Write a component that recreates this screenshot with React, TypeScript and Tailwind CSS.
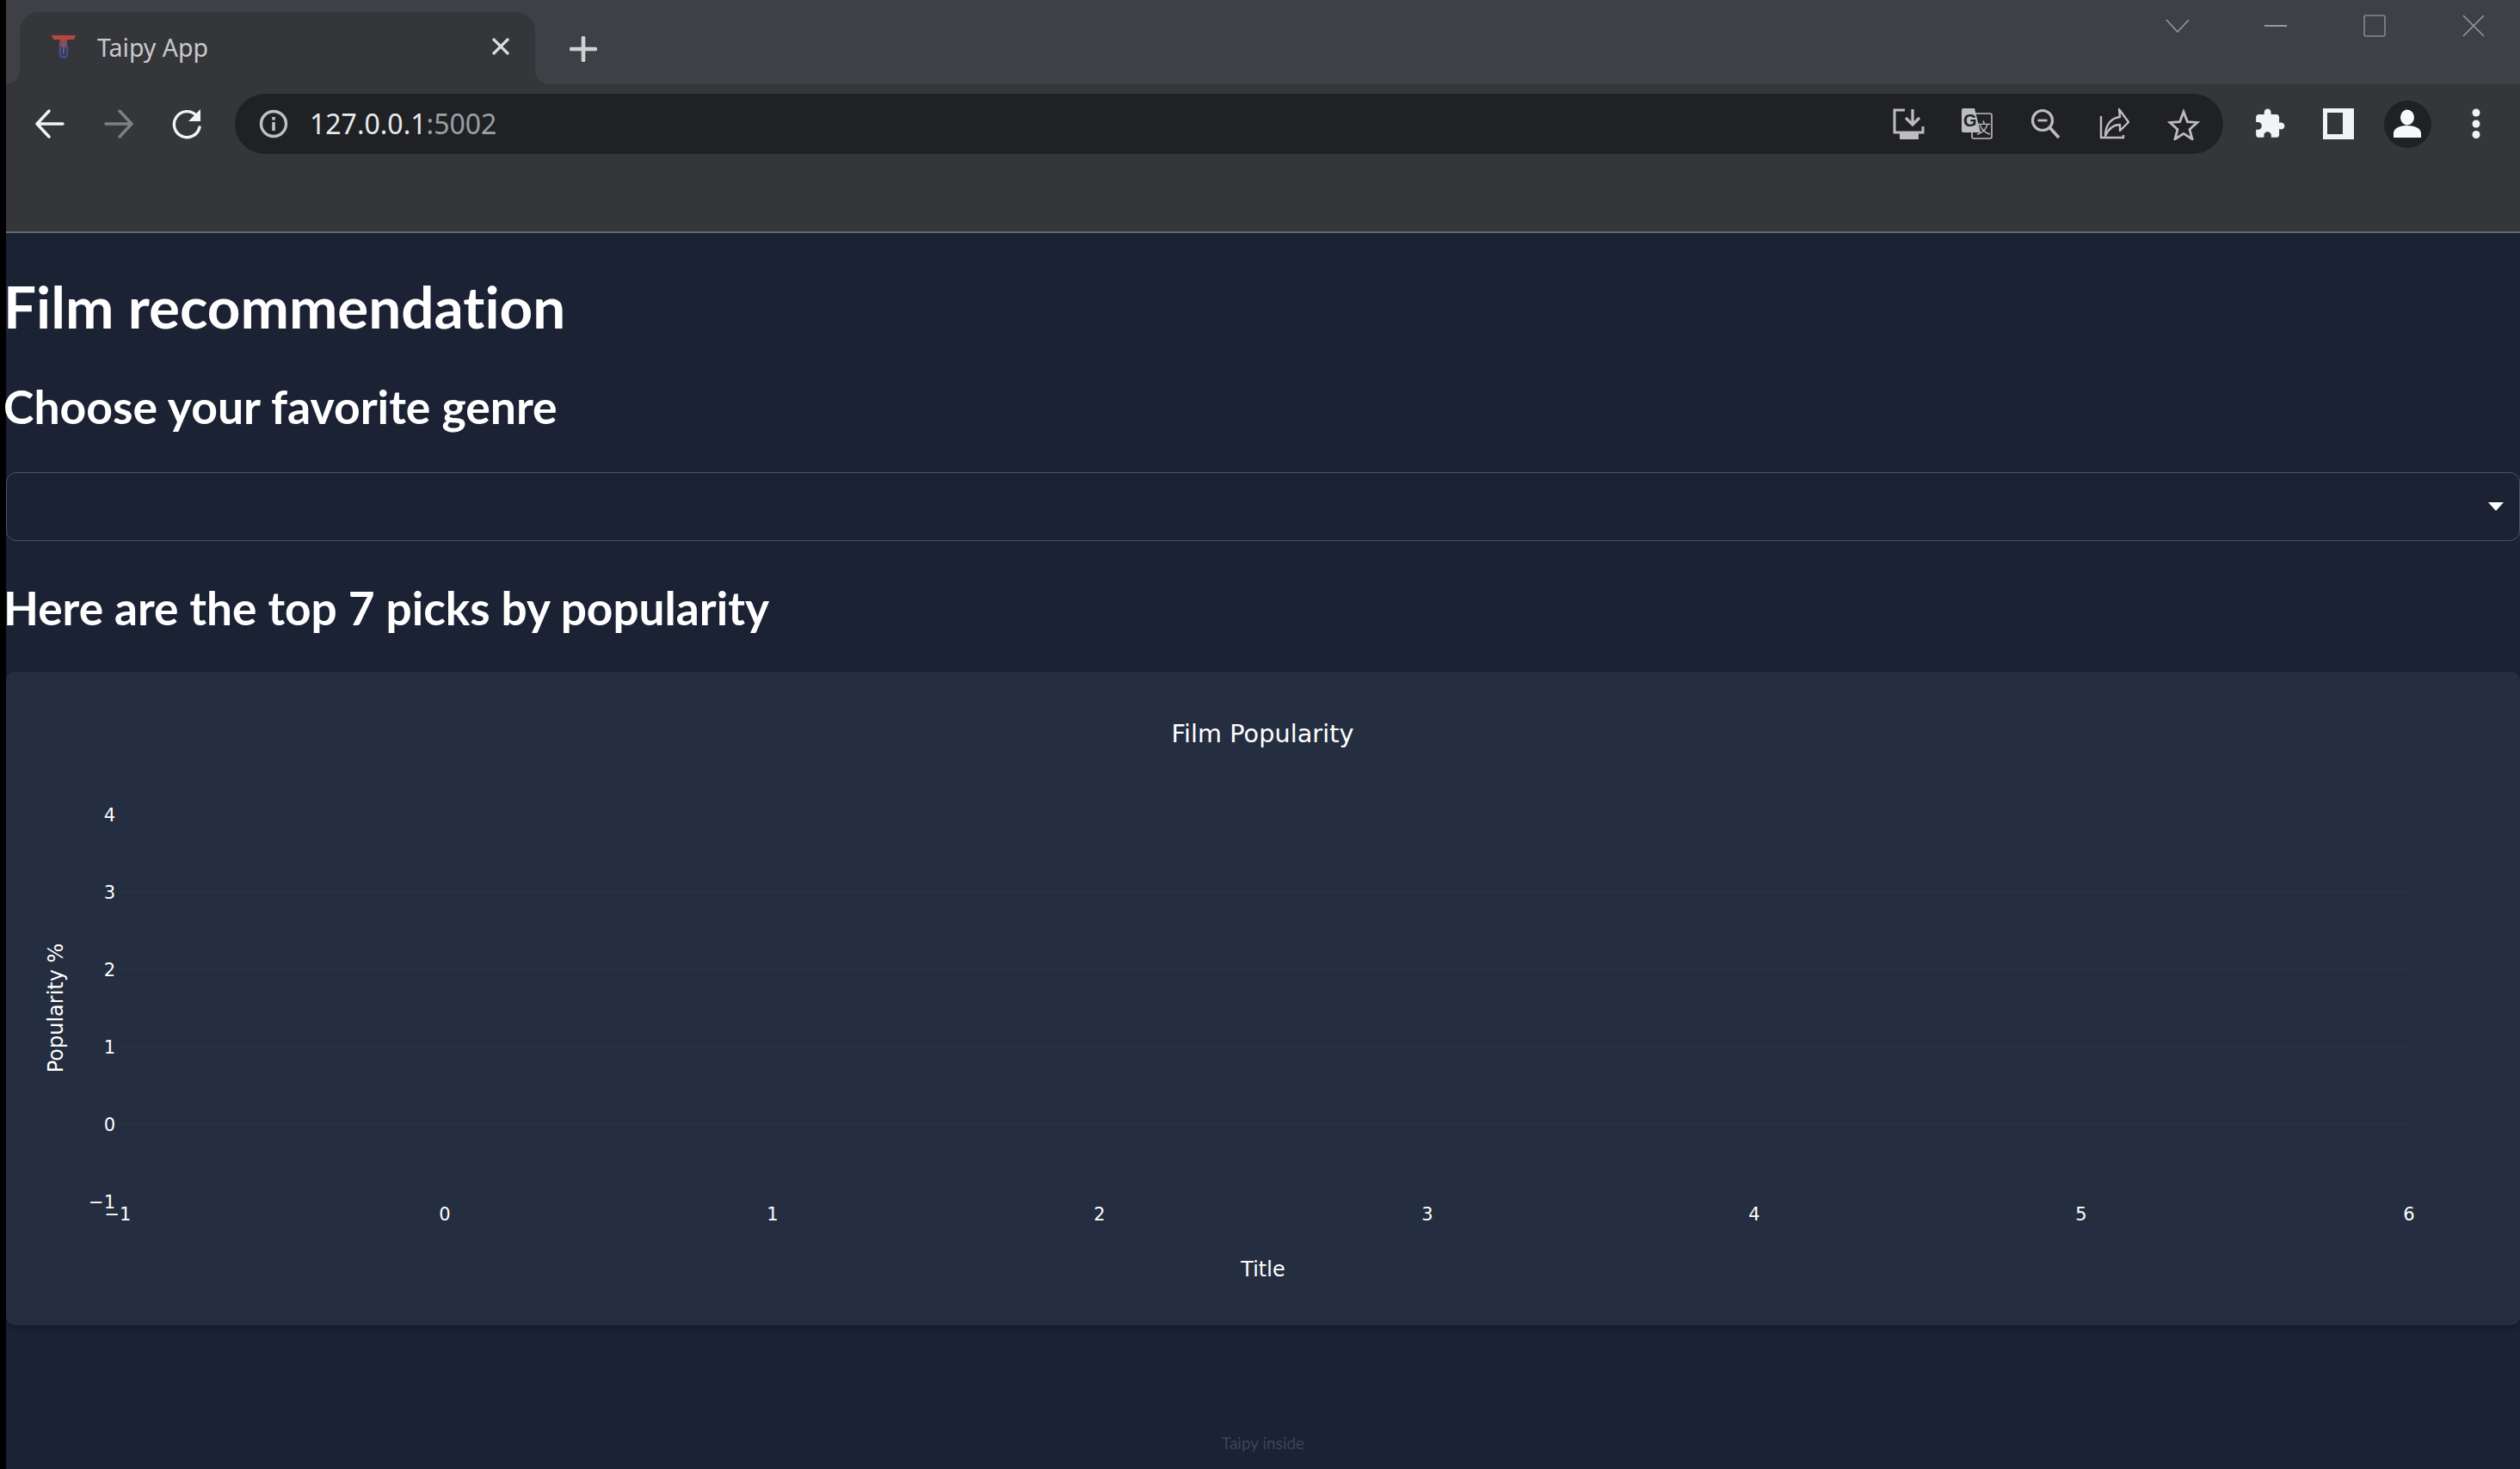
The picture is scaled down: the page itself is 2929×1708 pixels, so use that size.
import React from "react";

const ui = "font-['Noto_Sans','Open_Sans',sans-serif]";

function Favicon() {
  return (
    <svg width="30" height="30" viewBox="0 0 30 30" fill="none">
      <path d="M1 2h28l-2 5h-8l-2 3h-4l-2-3H3z" fill="#b5483f" />
      <path d="M10 8h9v8h-9z" fill="#8a4a4e" />
      <path d="M11 15v9c0 5 8 5 8 0v-10" stroke="#3c4f96" strokeWidth="2.6" />
      <path d="M15 10v14" stroke="#5c6288" strokeWidth="2" />
    </svg>
  );
}

function IconBtn({ children }: { children: React.ReactNode }) {
  return <div className="flex h-[70px] w-[80px] shrink-0 items-center justify-center">{children}</div>;
}

function Back({ color }: { color: string }) {
  return (
    <svg width="36" height="34" viewBox="0 0 36 34" fill="none" stroke={color} strokeWidth="3.4" strokeLinecap="round" strokeLinejoin="round">
      <path d="M33 17H4M17 2L3 17l14 15" />
    </svg>
  );
}

function Forward({ color }: { color: string }) {
  return (
    <svg width="36" height="34" viewBox="0 0 36 34" fill="none" stroke={color} strokeWidth="3.4" strokeLinecap="round" strokeLinejoin="round">
      <path d="M3 17h29M19 2l14 15-14 15" />
    </svg>
  );
}

function Reload() {
  return (
    <svg width="38" height="36" viewBox="0 0 38 36" fill="none">
      <path d="M29 8A15 15 0 1 0 33 22" stroke="#f1f3f4" strokeWidth="3.4" strokeLinecap="round" />
      <path d="M34 1v14H20z" fill="#f1f3f4" />
    </svg>
  );
}

function Info() {
  return (
    <svg width="34" height="34" viewBox="0 0 34 34" fill="none">
      <circle cx="17" cy="17" r="14.5" stroke="#bdc1c6" strokeWidth="3.4" />
      <rect x="15.2" y="15" width="3.6" height="10" fill="#bdc1c6" />
      <rect x="15.2" y="9" width="3.6" height="3.6" fill="#bdc1c6" />
    </svg>
  );
}

function Download() {
  return (
    <svg width="38" height="38" viewBox="0 0 38 38" fill="none">
      <path d="M15 3H3v26h33v-7" stroke="#bdbdc0" strokeWidth="3" />
      <path d="M24 2v17M16 12l8 8 8-8" stroke="#bdbdc0" strokeWidth="3.2" />
      <rect x="9" y="30" width="22" height="7" fill="#bdbdc0" />
    </svg>
  );
}

function Translate() {
  return (
    <svg width="38" height="38" viewBox="0 0 38 38" fill="none">
      <rect x="13" y="7" width="23" height="29" rx="2" stroke="#bdbdc0" strokeWidth="1.6" />
      <path d="M1 3a2 2 0 0 1 2-2h13l7 28H3a2 2 0 0 1-2-2z" fill="#bdbdc0" />
      <text x="3" y="22" fontSize="20" fontWeight="700" fill="#202124" fontFamily="'Liberation Sans',sans-serif">G</text>
      <text x="18" y="30" fontSize="17" fill="#bdbdc0" fontFamily="'Noto Sans CJK SC',sans-serif">文</text>
    </svg>
  );
}

function ZoomOut() {
  return (
    <svg width="38" height="38" viewBox="0 0 38 38" fill="none" stroke="#bdbdc0">
      <circle cx="15" cy="15" r="11.5" strokeWidth="3.2" />
      <path d="M23.5 23.5L34 35" strokeWidth="3.6" />
      <path d="M9.5 15h11" strokeWidth="2.8" />
    </svg>
  );
}

function Share() {
  return (
    <svg width="38" height="38" viewBox="0 0 38 38" fill="none" stroke="#bdbdc0" strokeWidth="2.4">
      <path d="M3 10v25h26v-3" />
      <path d="M8 33c0-13 7-21 17-22l-1-9 11 15-10 10v-7c-7 0-13 4-17 13z" strokeLinejoin="round" />
    </svg>
  );
}

function Star() {
  return (
    <svg width="38" height="38" viewBox="0 0 38 38" fill="none">
      <path d="M19 5l4.4 11.600 11.600.8-9 8 3 11.400-10-6.400-10 6.400 3-11.400-9-8 11.600-.8z" stroke="#bdbdc0" strokeWidth="2.800" strokeLinejoin="miter" />
    </svg>
  );
}

function Puzzle() {
  return (
    <svg width="38" height="38" viewBox="0 0 24 24" fill="#f1f3f4">
      <path d="M20.500 11H19V7c0-1.100-.9-2-2-2h-4V3.500C13 2.120 11.880 1 10.500 1S8 2.120 8 3.500V5H4c-1.100 0-1.990.9-1.990 2v3.800H3.500c1.490 0 2.700 1.210 2.700 2.700s-1.210 2.700-2.700 2.700H2V20c0 1.100.9 2 2 2h3.800v-1.500c0-1.490 1.210-2.700 2.700-2.700 1.490 0 2.700 1.210 2.700 2.700V22H17c1.100 0 2-.9 2-2v-4h1.500c1.380 0 2.500-1.120 2.500-2.500S21.880 11 20.500 11z" />
    </svg>
  );
}

function SidePanel() {
  return (
    <svg width="36" height="36" viewBox="0 0 36 36">
      <path fillRule="evenodd" clipRule="evenodd" d="M0 0h36v36H0zM5 5v25h18V5z" fill="#f1f3f4" />
    </svg>
  );
}

function Profile() {
  return (
    <div className="flex h-[55px] w-[55px] items-center justify-center rounded-full bg-[#202124]">
      <svg width="34" height="34" viewBox="0 0 34 34" fill="#f8f9fa">
        <ellipse cx="17" cy="9.500" rx="8" ry="9" />
        <path d="M1 33v-5c0-6 8-9 16-9s16 3 16 9v5z" />
      </svg>
    </div>
  );
}

function Dots() {
  return (
    <svg width="12" height="36" viewBox="0 0 12 36" fill="#f1f3f4">
      <circle cx="6" cy="5" r="4.500" />
      <circle cx="6" cy="18" r="4.500" />
      <circle cx="6" cy="30.500" r="4.500" />
    </svg>
  );
}

function WindowControls() {
  return (
    <div className="ml-auto flex h-[60px] items-center pr-[41px]">
      <svg width="28" height="16" viewBox="0 0 28 16" fill="none" stroke="#97989b" strokeWidth="1.600" className="mr-[87px]">
        <path d="M1 1l13 14L27 1" />
      </svg>
      <svg width="26" height="2" viewBox="0 0 26 2" className="mr-[89px]">
        <rect width="26" height="2" fill="#97989b" />
      </svg>
      <svg width="26" height="26" viewBox="0 0 26 26" fill="none" stroke="#87888b" strokeWidth="1.600" className="mr-[89px]">
        <rect x="1" y="1" width="24" height="24" rx="2" />
      </svg>
      <svg width="26" height="26" viewBox="0 0 26 26" fill="none" stroke="#97989b" strokeWidth="1.600">
        <path d="M1 1l24 24M25 1L1 25" />
      </svg>
    </div>
  );
}

function BrowserChrome() {
  return (
    <header className={`${ui} bg-[#35363a]`}>
      <div className="flex h-[98px] bg-[#3f4045]">
        <div className="relative ml-[16px] mt-[14px] flex h-[84px] w-[599px] items-center rounded-t-[22px] bg-[#35363a] pb-[5px] pl-[36px] pr-[29px]">
          <span className="absolute -left-[16px] bottom-0 h-[16px] w-[16px] bg-[#35363a]">
            <span className="block h-full w-full rounded-br-[16px] bg-[#3f4045]" />
          </span>
          <span className="absolute -right-[16px] bottom-0 h-[16px] w-[16px] bg-[#35363a]">
            <span className="block h-full w-full rounded-bl-[16px] bg-[#3f4045]" />
          </span>
          <Favicon />
          <span className="ml-[24px] mt-[3px] text-[28.5px] leading-none text-[#c8c9cc]">Taipy App</span>
          <svg width="22" height="20" viewBox="0 0 22 20" fill="none" stroke="#dcdde0" strokeWidth="3.200" className="ml-auto">
            <path d="M2 1l18 18M20 1L2 19" />
          </svg>
        </div>
        <svg width="32" height="30" viewBox="0 0 32 30" fill="none" stroke="#d0d1d4" strokeWidth="4.600" strokeLinecap="round" className="ml-[40px] mt-[42px]">
          <path d="M16 2v26M2 15h28" />
        </svg>
        <WindowControls />
      </div>
      <div className="box-content flex h-[171px] items-start border-b-2 border-[#66676a]">
        <div className="mt-[11px] flex w-full items-center px-[11px]">
          <IconBtn><Back color="#f1f3f4" /></IconBtn>
          <IconBtn><Forward color="#7f8083" /></IconBtn>
          <IconBtn><Reload /></IconBtn>
          <div className="ml-[15px] flex h-[70px] min-w-0 flex-1 items-center rounded-full bg-[#202124] pl-[28px] pr-[6px]">
            <Info />
            <span className="ml-[25px] text-[32px] leading-none text-[#e8eaed]">
              127.0.0.1<span className="text-[#9aa0a6]">:5002</span>
            </span>
            <div className="ml-auto flex items-center">
              <IconBtn><Download /></IconBtn>
              <IconBtn><Translate /></IconBtn>
              <IconBtn><ZoomOut /></IconBtn>
              <IconBtn><Share /></IconBtn>
              <IconBtn><Star /></IconBtn>
            </div>
          </div>
          <div className="ml-[14px] flex items-center">
            <IconBtn><Puzzle /></IconBtn>
            <IconBtn><SidePanel /></IconBtn>
            <IconBtn><Profile /></IconBtn>
            <IconBtn><Dots /></IconBtn>
          </div>
        </div>
      </div>
    </header>
  );
}

const X_TICKS = [
  { label: "−1", x: 130 },
  { label: "0", x: 510 },
  { label: "1", x: 891 },
  { label: "2", x: 1271 },
  { label: "3", x: 1652 },
  { label: "4", x: 2032 },
  { label: "5", x: 2412 },
  { label: "6", x: 2793 },
];
const Y_TICKS = [
  { label: "4", y: 166, grid: false },
  { label: "3", y: 256, grid: true },
  { label: "2", y: 346, grid: true },
  { label: "1", y: 436, grid: true },
  { label: "0", y: 526, grid: true },
  { label: "−1", y: 616, grid: false },
];

function Chart() {
  return (
    <section className="mt-[43px] h-[760px] rounded-[10px] bg-[#252e40] shadow-[0_2px_6px_rgba(0,0,0,0.35)]">
      <svg width="2922" height="760" viewBox="0 0 2922 760" fill="#ffffff" fontFamily="'DejaVu Sans',sans-serif">
        {Y_TICKS.filter((t) => t.grid).map((t) => (
          <line key={t.label} x1="130" x2="2793" y1={t.y} y2={t.y} stroke="#2c3445" strokeWidth="1" />
        ))}
        {X_TICKS.map((t) => (
          <text key={t.label} x={t.x} y="638" fontSize="21" textAnchor="middle">{t.label}</text>
        ))}
        {Y_TICKS.map((t) => (
          <text key={t.label} x="127" y={t.y + 8} fontSize="21" textAnchor="end">{t.label}</text>
        ))}
        <text x="1460.500" y="82" fontSize="28.800" textAnchor="middle">Film Popularity</text>
        <text x="1461" y="703" fontSize="24" textAnchor="middle">Title</text>
        <text transform="translate(66 391) rotate(-90)" fontSize="24" textAnchor="middle">Popularity %</text>
      </svg>
    </section>
  );
}

export default function App() {
  return (
    <div className="flex h-[1708px] w-[2929px] overflow-hidden bg-black">
      <div className="w-[7px] shrink-0" />
      <div className="flex min-w-0 flex-1 flex-col bg-[#1b2234]">
        <BrowserChrome />
        <main className="font-['Lato',sans-serif] text-white [font-variant-ligatures:none]">
          <h1 className="-ml-[3px] mt-[45px] text-[67.400px] font-bold leading-[80px]">Film recommendation</h1>
          <h2 className="-ml-[3px] mt-[44px] text-[53.500px] font-bold leading-[64px]">Choose your favorite genre</h2>
          <div className="mt-[45px] flex h-[80px] items-center justify-end rounded-[12px] border-[1.5px] border-[#4f5362] pr-[18px]">
            <svg width="18" height="10" viewBox="0 0 18 10"><path d="M0 0h18L9 10z" fill="#ffffff" /></svg>
          </div>
          <h3 className="-ml-[3px] mt-[45px] text-[53.200px] font-bold leading-[64px]">Here are the top 7 picks by popularity</h3>
          <Chart />
          <p className="mt-[125px] text-center text-[19px] leading-[24px] text-[#3f4454]">Taipy inside</p>
        </main>
      </div>
    </div>
  );
}
